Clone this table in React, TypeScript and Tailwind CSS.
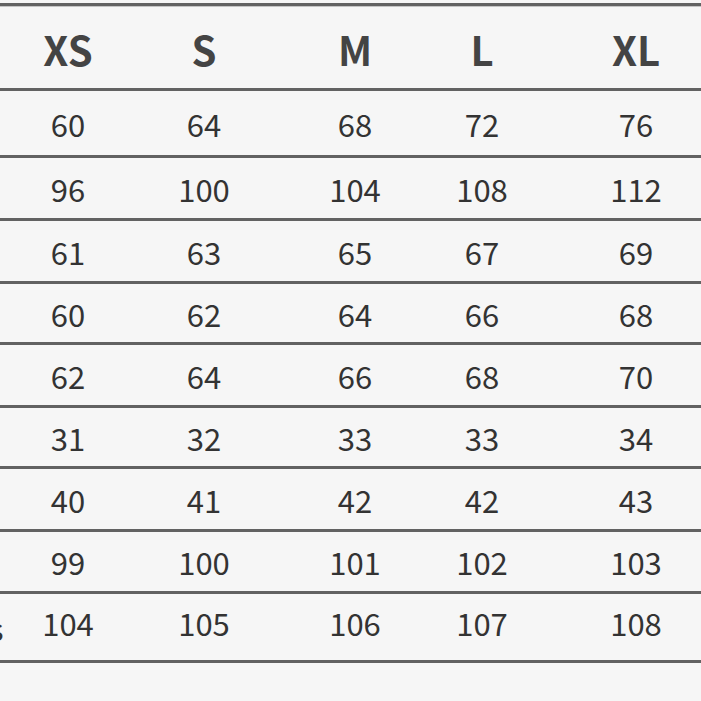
import React from "react";

const sizes = ["XS", "S", "M", "L", "XL"];
const rows: { h: string; v: string[] }[] = [
  { h: "h-[67px]", v: ["60", "64", "68", "72", "76"] },
  { h: "h-[63px]", v: ["96", "100", "104", "108", "112"] },
  { h: "h-[63px]", v: ["61", "63", "65", "67", "69"] },
  { h: "h-[61px]", v: ["60", "62", "64", "66", "68"] },
  { h: "h-[63px]", v: ["62", "64", "66", "68", "70"] },
  { h: "h-[61px]", v: ["31", "32", "33", "33", "34"] },
  { h: "h-[63px]", v: ["40", "41", "42", "42", "43"] },
  { h: "h-[62px]", v: ["99", "100", "101", "102", "103"] },
  { h: "h-[69px] pb-[9px]", v: ["104", "105", "106", "107", "108"] },
];

const grid = "grid grid-cols-[136px_136px_166px_88px_220px] items-center";

export default function App() {
  return (
    <div
      className="w-[701px] h-[701px] overflow-hidden bg-[#f6f6f6] text-[#333]"
      style={{ fontFamily: '"Noto Sans CJK SC", "Noto Sans", sans-serif' }}
    >
      <div className="w-[746px] pt-[3px]">
        <div className="border-t-[3px] border-[#626262] shadow-[0_1px_0_#c4c4c4]" />
        <div className={`${grid} h-[85px] border-b-[3px] border-[#626262] text-[40px] font-semibold text-[#444] leading-none`}>
          {sizes.map((s) => (
            <div key={s} className="text-center pt-[4px]">{s}</div>
          ))}
        </div>
        {rows.map((r, i) => (
          <div
            key={i}
            className={`${grid} ${r.h} border-b-[3px] border-[#626262] text-[31px] leading-none relative`}
          >
            {i === rows.length - 1 && (
              <span className="absolute left-[-11px] text-[31px]">s</span>
            )}
            {r.v.map((n, j) => (
              <div key={j} className="text-center">{n}</div>
            ))}
          </div>
        ))}
      </div>
    </div>
  );
}
